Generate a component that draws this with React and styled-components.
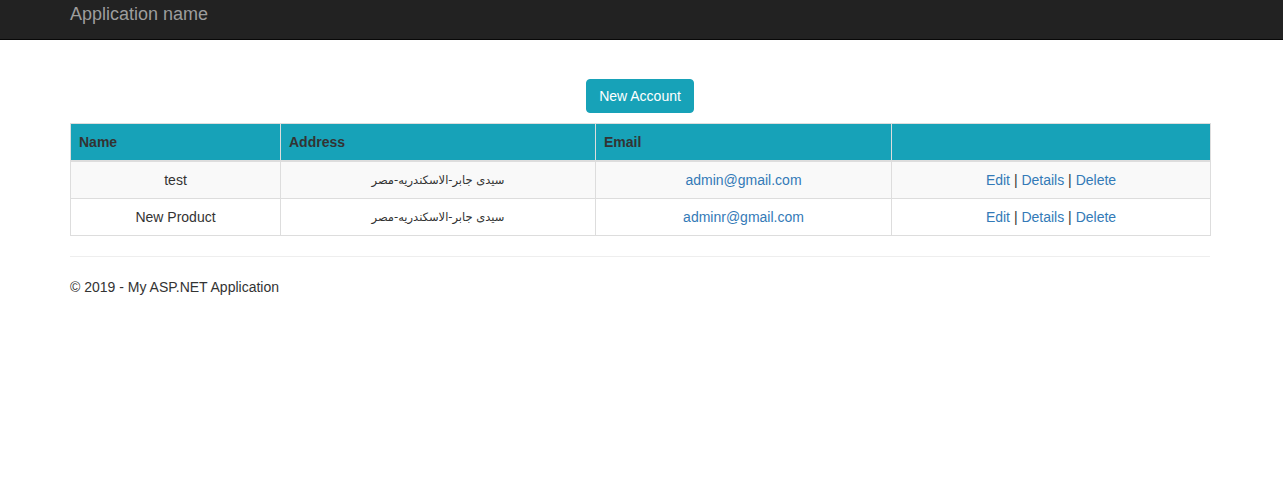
import React from "react"
import styled, { createGlobalStyle } from "styled-components"

const GlobalStyle = createGlobalStyle`
  html, body {
    margin: 0;
    padding: 0;
    background: #fff;
  }
  body {
    font-family: "Liberation Sans", Arial, "DejaVu Sans", sans-serif;
    font-size: 14px;
    line-height: 1.42857;
    color: #333;
  }
  * {
    box-sizing: border-box;
  }
`

const accounts = [
  { name: "test", address: "سيدى جابر-الاسكندريه-مصر", email: "admin@gmail.com", striped: true },
  { name: "New Product", address: "سيدى جابر-الاسكندريه-مصر", email: "adminr@gmail.com" },
]

const App = () => {
  return (
    <>
      <GlobalStyle />
      <Navbar>
        <Container>
          <Brand href="#">Application name</Brand>
        </Container>
      </Navbar>
      <Container>
        <Actions>
          <Button>New Account</Button>
        </Actions>
        <Table>
          <colgroup>
            <col style={{ width: 210 }} />
            <col style={{ width: 315 }} />
            <col style={{ width: 296 }} />
            <col style={{ width: 319 }} />
          </colgroup>
          <thead>
            <tr>
              <Th>Name</Th>
              <Th>Address</Th>
              <Th>Email</Th>
              <Th></Th>
            </tr>
          </thead>
          <tbody>
            {accounts.map((a) => (
              <Row key={a.email} $striped={a.striped}>
                <Td>{a.name}</Td>
                <Td><Arabic dir="rtl">{a.address}</Arabic></Td>
                <Td><Link href="#">{a.email}</Link></Td>
                <Td>
                  <Link href="#">Edit</Link> | <Link href="#">Details</Link> | <Link href="#">Delete</Link>
                </Td>
              </Row>
            ))}
          </tbody>
        </Table>
        <Rule />
        <Footer>© 2019 - My ASP.NET Application</Footer>
      </Container>
    </>
  )
}

export default App

const Navbar = styled.nav`
  background: #222;
  border-bottom: 1px solid #080808;
  height: 40px;
`

const Container = styled.div`
  width: 1170px;
  margin: 0 55px;
  padding: 0 15px;
`

const Brand = styled.a`
  display: inline-block;
  padding-top: 4px;
  font-size: 18px;
  line-height: 20px;
  color: #9d9d9d;
  text-decoration: none;
`

const Actions = styled.div`
  display: flex;
  justify-content: center;
  padding-top: 39px;
  margin-bottom: 10px;
`

const Button = styled.button`
  height: 34px;
  padding: 6px 12px;
  font-family: inherit;
  font-size: 14px;
  line-height: 20px;
  color: #fff;
  background: #17a2b8;
  border: 1px solid #17a2b8;
  border-radius: 4px;
  cursor: pointer;
`

const Table = styled.table`
  width: 1140px;
  table-layout: fixed;
  border-collapse: collapse;
  border: 1px solid #ddd;
  margin-bottom: 20px;
`

const Th = styled.th`
  background: #17a2b8;
  text-align: left;
  font-weight: bold;
  color: #333;
  padding: 8px;
  line-height: 20px;
  border: 1px solid #ddd;
  border-bottom-width: 2px;
`

const Row = styled.tr`
  background: ${({ $striped }) => ($striped ? "#f9f9f9" : "#fff")};
`

const Td = styled.td`
  text-align: center;
  padding: 8px;
  height: 37px;
  line-height: 20px;
  border: 1px solid #ddd;
`

const Arabic = styled.span`
  display: inline-block;
  vertical-align: top;
  font-family: "DejaVu Sans", sans-serif;
  font-size: 11.5px;
  line-height: 20px;
  height: 20px;
`

const Link = styled.a`
  color: #337ab7;
  text-decoration: none;
`

const Rule = styled.hr`
  margin: 20px 0;
  border: 0;
  border-top: 1px solid #eee;
`

const Footer = styled.p`
  margin: 0 0 10px;
  padding-top: 1px;
`
